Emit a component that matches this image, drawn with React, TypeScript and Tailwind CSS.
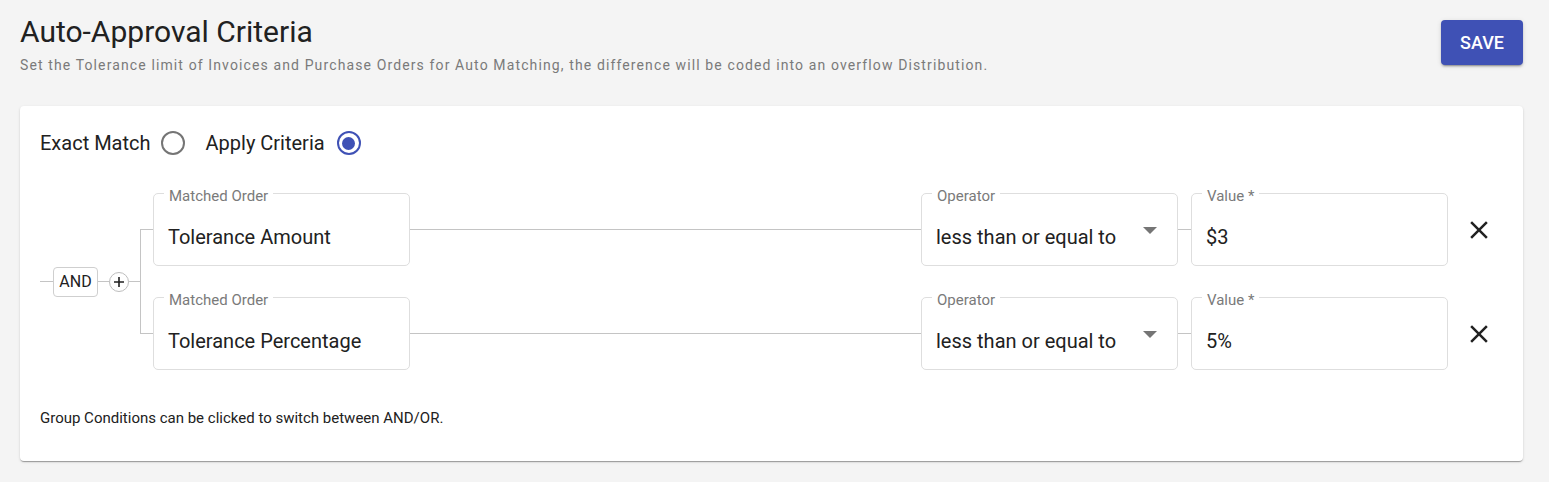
import { useState } from "react";

const rows = [
  { field: "Tolerance Amount", op: "less than or equal to", value: "$3" },
  { field: "Tolerance Percentage", op: "less than or equal to", value: "5%" },
];

function OutlinedBox({ label, value, select }: { label: string; value: string; select?: boolean }) {
  return (
    <div className="relative w-[257px] h-[73px] shrink-0 rounded-[5px] border border-[#dedede] bg-white px-[14px] pt-[31px]">
      <span className="absolute left-[10px] -top-[6px] bg-white px-[5px] text-[15px] leading-4 text-[#7a7a7a]">
        {label}
      </span>
      <div className="text-[20px] leading-6 text-[#212121]">{value}</div>
      {select && (
        <svg className="absolute right-[20px] top-[33px]" width="14" height="7" viewBox="0 0 14 7">
          <path d="M0 0 L14 0 L7 7 Z" fill="#757575" />
        </svg>
      )}
    </div>
  );
}

function Radio({ checked }: { checked: boolean }) {
  return checked ? (
    <span className="flex h-6 w-6 items-center justify-center rounded-full border-[2.5px] border-[#3f51b5]">
      <span className="h-[13px] w-[13px] rounded-full bg-[#3f51b5]" />
    </span>
  ) : (
    <span className="h-6 w-6 rounded-full border-[2.5px] border-[#757575]" />
  );
}

export default function App() {
  const [mode, setMode] = useState("criteria");

  return (
    <div className="min-h-[482px] bg-[#f4f4f4] font-['Roboto',sans-serif] text-[#212121]">
      {/* Header */}
      <div className="flex items-start justify-between pl-5 pr-[26px] pt-[17px]">
        <div>
          <h1 className="text-[30px] leading-[30px] font-normal text-[#212121]">Auto-Approval Criteria</h1>
          <p className="mt-[8px] text-[14px] leading-5 tracking-[1.12px] text-[#7a7a7a]">
            Set the Tolerance limit of Invoices and Purchase Orders for Auto Matching, the difference will be coded into an overflow Distribution.
          </p>
        </div>
        <button className="mt-[3px] h-[45px] w-[82px] rounded-[4px] bg-[#3f51b5] text-[18px] font-medium text-white shadow-[0_3px_1px_-2px_rgba(0,0,0,0.2),0_2px_2px_0_rgba(0,0,0,0.14),0_1px_5px_0_rgba(0,0,0,0.12)]">
          SAVE
        </button>
      </div>

      {/* Card */}
      <div className="ml-5 mr-[26px] mt-[31px] rounded-[4px] bg-white px-5 pt-[25px] pb-[33px] shadow-[0_2px_1px_-1px_rgba(0,0,0,0.2),0_1px_1px_0_rgba(0,0,0,0.14),0_1px_3px_0_rgba(0,0,0,0.12)]">
        <div className="flex h-6 items-center text-[20px]">
          <button className="flex items-center gap-[10px]" onClick={() => setMode("exact")}>
            <span>Exact Match</span>
            <Radio checked={mode === "exact"} />
          </button>
          <button className="ml-[21px] flex items-center gap-[12px]" onClick={() => setMode("criteria")}>
            <span>Apply Criteria</span>
            <Radio checked={mode === "criteria"} />
          </button>
        </div>

        <div className="mt-[38px] flex items-center">
          <div className="flex items-center">
            <div className="h-px w-[13px] bg-[#c4c4c4]" />
            <button className="flex h-[30px] w-[45px] items-center justify-center rounded-[4px] border border-[#cfcfcf] text-[16px] text-[#212121]">
              AND
            </button>
            <div className="h-px w-[11px] bg-[#c4c4c4]" />
            <span className="flex h-[20px] w-[20px] items-center justify-center rounded-full border border-[#bdbdbd]">
              <svg width="12" height="12" viewBox="0 0 12 12">
                <path d="M6 1v10M1 6h10" stroke="#212121" strokeWidth="1.6" />
              </svg>
            </span>
            <div className="h-px w-[11px] bg-[#c4c4c4]" />
          </div>
          <div className="my-[36px] w-[13px] self-stretch border border-r-0 border-[#c4c4c4]" />
          <div className="flex flex-1 flex-col gap-[31px]">
            {rows.map((r) => (
              <div key={r.field} className="flex items-center">
                <OutlinedBox label="Matched Order" value={r.field} />
                <div className="h-px flex-1 bg-[#c4c4c4]" />
                <OutlinedBox label="Operator" value={r.op} select />
                <div className="h-px w-[13px] bg-[#c4c4c4]" />
                <OutlinedBox label="Value *" value={r.value} />
                <button className="ml-[7px] flex h-12 w-12 items-center justify-center">
                  <svg width="30" height="30" viewBox="0 0 24 24">
                    <path
                      d="M19 6.41L17.59 5 12 10.59 6.41 5 5 6.41 10.59 12 5 17.59 6.41 19 12 13.41 17.59 19 19 17.59 13.41 12z"
                      fill="#212121"
                    />
                  </svg>
                </button>
              </div>
            ))}
          </div>
        </div>

        <p className="mt-[38px] text-[15px] leading-5 text-[#212121]">
          Group Conditions can be clicked to switch between AND/OR.
        </p>
      </div>
    </div>
  );
}
